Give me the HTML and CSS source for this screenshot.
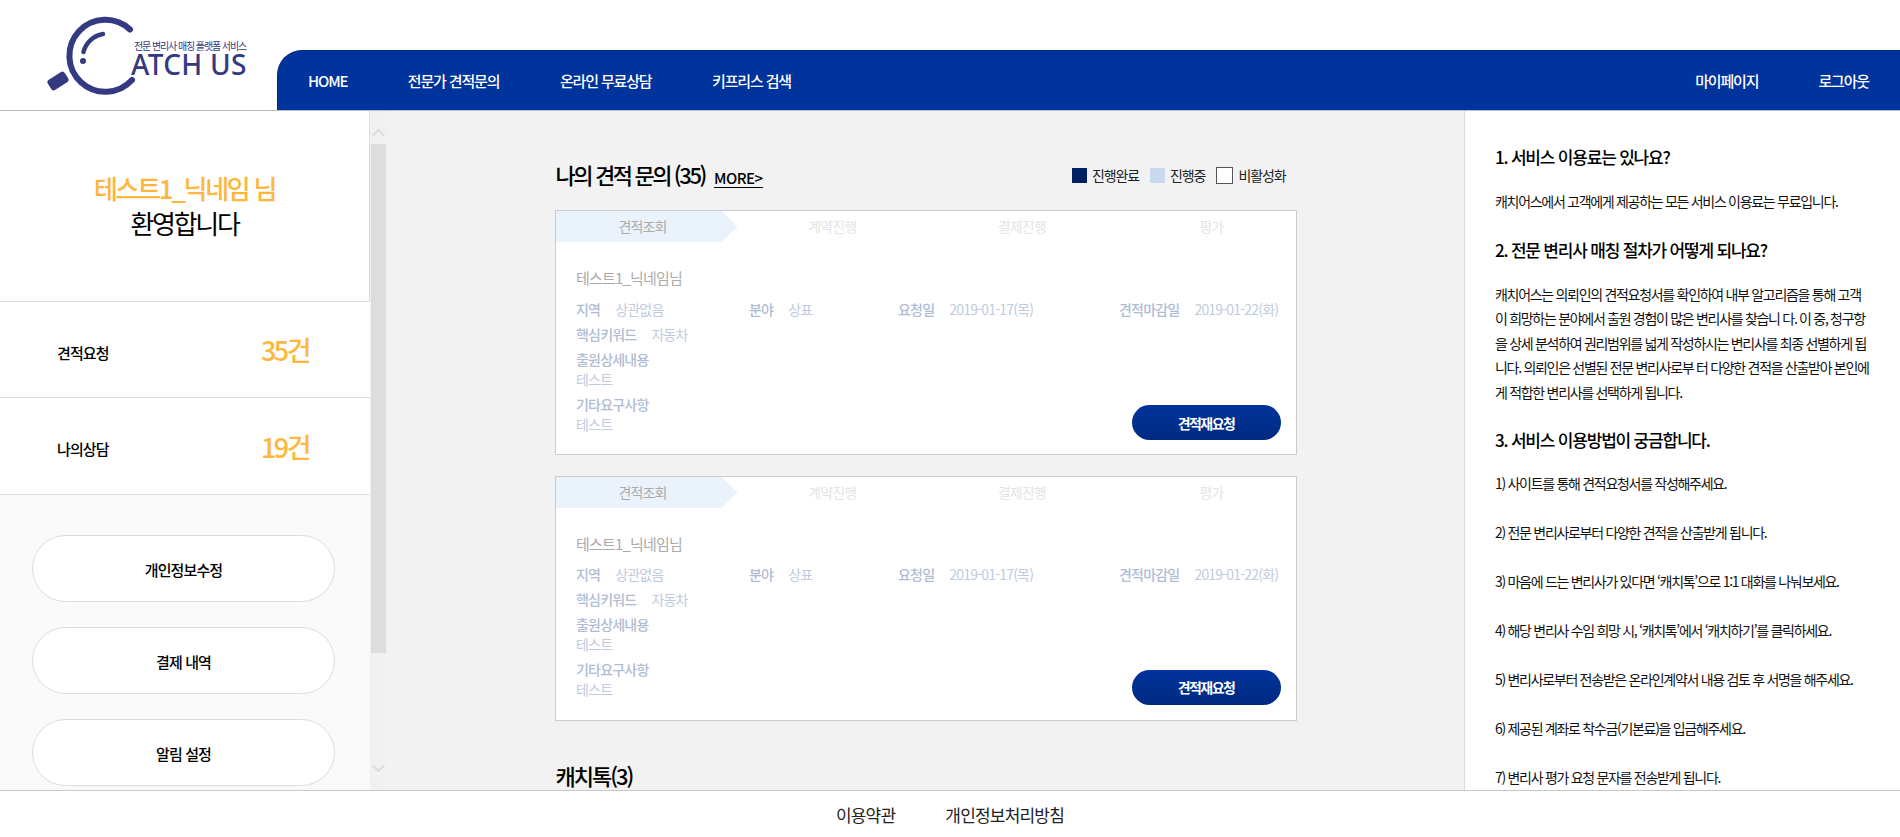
FILE: index.html
```html
<!DOCTYPE html>
<html lang="ko">
<head>
    <meta charset="UTF-8">
    <meta name="viewport" content="width=device-width, initial-scale=1.0">
    <title>CATCH US</title>
    <link rel="stylesheet" href="styles.css">
</head>
<body>
    <header class="top">
        <a class="logo" href="#">
            <svg class="logo-mark" width="140" height="110" viewBox="0 0 140 110">
                <path d="M130 29.5 A36 36 0 1 0 132 80" fill="none" stroke="#333a82" stroke-width="6" stroke-linecap="round"/>
                <path d="M83.5 52 A24 24 0 0 1 103 34" fill="none" stroke="#333a82" stroke-width="4.5" stroke-linecap="round"/>
                <circle cx="83" cy="61" r="3" fill="#333a82"/>
                <rect x="48" y="75" width="20" height="12" rx="3" fill="#333a82" transform="rotate(-33 58 81)"/>
            </svg>
            <span class="logo-sub">전문 변리사 매칭 플랫폼 서비스</span>
            <span class="logo-name">ATCH US</span>
        </a>
        <nav class="gnb">
            <a href="#">HOME</a>
            <a href="#">전문가 견적문의</a>
            <a href="#">온라인 무료상담</a>
            <a href="#">키프리스 검색</a>
            <span class="gnb-right">
                <a href="#">마이페이지</a>
                <a href="#">로그아웃</a>
            </span>
        </nav>
    </header>

    <div class="wrap">
        <aside class="side">
            <div class="welcome">
                <p class="nick">테스트1_닉네임 님</p>
                <p class="hello">환영합니다</p>
            </div>
            <div class="stat"><span>견적요청</span><strong>35건</strong></div>
            <div class="stat"><span>나의상담</span><strong>19건</strong></div>
            <div class="side-menu">
                <a href="#">개인정보수정</a>
                <a href="#">결제 내역</a>
                <a href="#">알림 설정</a>
            </div>
        </aside>
        <div class="scrollbar">
            <svg width="15" height="9" viewBox="0 0 15 9"><path d="M2 7.5 L7.5 2 L13 7.5" fill="none" stroke="#dcdcdc" stroke-width="2"/></svg>
            <div class="thumb"></div>
            <svg class="arrow-down" width="15" height="9" viewBox="0 0 15 9"><path d="M2 1.5 L7.5 7 L13 1.5" fill="none" stroke="#dcdcdc" stroke-width="2"/></svg>
        </div>

        <main class="content">
            <div class="inner">
                <div class="title-row">
                    <h2>나의 견적 문의 (35)</h2>
                    <a class="more" href="#">MORE&gt;</a>
                    <ul class="legend">
                        <li><i class="done"></i>진행완료</li>
                        <li><i class="ing"></i>진행중</li>
                        <li><i class="off"></i>비활성화</li>
                    </ul>
                </div>

                <section class="card">
                    <div class="steps">
                        <span class="on">견적조회</span>
                        <span>계약진행</span>
                        <span>결제진행</span>
                        <span>평가</span>
                    </div>
                    <div class="card-body">
                        <p class="who">테스트1_닉네임님</p>
                        <div class="info">
                            <div><b>지역</b>상관없음</div>
                            <div><b>분야</b>상표</div>
                            <div><b>요청일</b>2019-01-17(목)</div>
                            <div><b>견적마감일</b>2019-01-22(화)</div>
                        </div>
                        <div class="line"><b>핵심키워드</b>자동차</div>
                        <div class="card-foot">
                            <div>
                                <dl><dt>출원상세내용</dt><dd>테스트</dd></dl>
                                <dl><dt>기타요구사항</dt><dd>테스트</dd></dl>
                            </div>
                            <button class="btn-re">견적재요청</button>
                        </div>
                    </div>
                </section>

                <section class="card">
                    <div class="steps">
                        <span class="on">견적조회</span>
                        <span>계약진행</span>
                        <span>결제진행</span>
                        <span>평가</span>
                    </div>
                    <div class="card-body">
                        <p class="who">테스트1_닉네임님</p>
                        <div class="info">
                            <div><b>지역</b>상관없음</div>
                            <div><b>분야</b>상표</div>
                            <div><b>요청일</b>2019-01-17(목)</div>
                            <div><b>견적마감일</b>2019-01-22(화)</div>
                        </div>
                        <div class="line"><b>핵심키워드</b>자동차</div>
                        <div class="card-foot">
                            <div>
                                <dl><dt>출원상세내용</dt><dd>테스트</dd></dl>
                                <dl><dt>기타요구사항</dt><dd>테스트</dd></dl>
                            </div>
                            <button class="btn-re">견적재요청</button>
                        </div>
                    </div>
                </section>

                <h2 class="talk-title">캐치톡(3)</h2>
            </div>
        </main>

        <aside class="faq">
            <h3>1. 서비스 이용료는 있나요?</h3>
            <p>캐치어스에서 고객에게 제공하는 모든 서비스 이용료는 무료입니다.</p>
            <h3>2. 전문 변리사 매칭 절차가 어떻게 되나요?</h3>
            <p>캐치어스는 의뢰인의 견적요청서를 확인하여 내부 알고리즘을 통해 고객이 희망하는 분야에서 출원 경험이 많은 변리사를 찾습니 다. 이 중, 청구항을 상세 분석하여 권리범위를 넓게 작성하시는 변리사를 최종 선별하게 됩니다. 의뢰인은 선별된 전문 변리사로부 터 다양한 견적을 산출받아 본인에게 적합한 변리사를 선택하게 됩니다.</p>
            <h3>3. 서비스 이용방법이 궁금합니다.</h3>
            <ol>
                <li>1) 사이트를 통해 견적요청서를 작성해주세요.</li>
                <li>2) 전문 변리사로부터 다양한 견적을 산출받게 됩니다.</li>
                <li>3) 마음에 드는 변리사가 있다면 ‘캐치톡’으로 1:1 대화를 나눠보세요.</li>
                <li>4) 해당 변리사 수임 희망 시, ‘캐치톡’에서 ‘캐치하기’를 클릭하세요.</li>
                <li>5) 변리사로부터 전송받은 온라인계약서 내용 검토 후 서명을 해주세요.</li>
                <li>6) 제공된 계좌로 착수금(기본료)을 입금해주세요.</li>
                <li>7) 변리사 평가 요청 문자를 전송받게 됩니다.</li>
            </ol>
        </aside>
    </div>

    <footer class="bottom">
        <a href="#">이용약관</a>
        <a href="#">개인정보처리방침</a>
    </footer>
</body>
</html>
```

FILE: styles.css
```css
* {
    box-sizing: border-box;
}
html, body {
    height: 100%;
}
body {
    margin: 0;
    display: flex;
    flex-direction: column;
    overflow: hidden;
    font-family: "Noto Sans CJK KR", "Noto Sans", sans-serif;
    color: #000;
    background: #fff;
}
a {
    color: inherit;
    text-decoration: none;
}
p, h2, h3, ul, ol, dl, dd {
    margin: 0;
    padding: 0;
}
ul, ol {
    list-style: none;
}

/* header */
.top {
    flex: none;
    display: flex;
    height: 111px;
    border-bottom: 1px solid #bdbdbd;
}
.logo {
    position: relative;
    width: 277px;
    flex: none;
    color: #333a82;
}
.logo-mark {
    position: absolute;
    left: 0;
    top: 0;
}
.logo-sub {
    position: absolute;
    left: 134px;
    top: 41px;
    font-size: 10px;
    line-height: 10px;
    letter-spacing: -1.1px;
    white-space: nowrap;
}
.logo-name {
    position: absolute;
    left: 131px;
    top: 52px;
    font-family: "Noto Sans", sans-serif;
    font-size: 28px;
    line-height: 24px;
    font-weight: 500;
    letter-spacing: 0.3px;
    white-space: nowrap;
}
.gnb {
    flex: 1;
    display: flex;
    align-items: center;
    gap: 60.5px;
    margin-top: 50px;
    padding: 0 31px 0 30px;
    background: #00339c;
    border-top: 1px solid #002a80;
    border-left: 1px solid #002a80;
    border-top-left-radius: 25px;
    color: #fff;
    font-size: 15px;
    font-weight: 500;
    letter-spacing: -1.15px;
}
.gnb-right {
    margin-left: auto;
    display: flex;
    gap: 60px;
}

/* layout */
.wrap {
    flex: 1;
    min-height: 0;
    display: flex;
    overflow: hidden;
}

/* left */
.side {
    flex: none;
    width: 370px;
    overflow: hidden;
    background: #fafafa;
}
.welcome {
    height: 191px;
    padding-top: 59px;
    background: #fff;
    border-right: 1px solid #ddd;
    border-bottom: 1px solid #ddd;
    text-align: center;
    font-size: 26px;
    line-height: 35px;
    letter-spacing: -2.3px;
}
.nick {
    color: #ffb63c;
    font-weight: 500;
}
.stat {
    display: flex;
    align-items: center;
    justify-content: space-between;
    height: 96px;
    padding: 0 61px 0 57px;
    background: #fff;
    border-bottom: 1px solid #ddd;
    font-size: 15px;
    letter-spacing: -0.9px;
    font-weight: 500;
}
.stat + .stat {
    height: 97px;
}
.stat span {
    margin-top: 5px;
}
.stat strong {
    color: #ffb63c;
    font-size: 27px;
    font-weight: 500;
    letter-spacing: -2.5px;
}
.side-menu {
    display: flex;
    flex-direction: column;
    gap: 25px;
    padding: 40px 35px 0 32px;
}
.side-menu a {
    height: 67px;
    line-height: 68px;
    text-align: center;
    background: #fff;
    border: 1px solid #ddd;
    border-radius: 34px;
    font-size: 15px;
    font-weight: 500;
    letter-spacing: -0.9px;
}

/* fake scrollbar of the left panel */
.scrollbar {
    flex: none;
    width: 17px;
    display: flex;
    flex-direction: column;
    align-items: center;
    padding: 17px 1px 0;
    background: #f1f1f1;
}
.scrollbar svg {
    flex: none;
}
.thumb {
    width: 15px;
    height: 509px;
    margin-top: 7px;
    background: #ddd;
}
.arrow-down {
    margin-top: 111px;
}

/* middle */
.content {
    flex: 1;
    min-width: 0;
    overflow: hidden;
    background: #f2f2f2;
}
.inner {
    width: 742px;
    margin: 0 auto;
    padding-top: 47px;
}
.title-row {
    display: flex;
    align-items: center;
    height: 34px;
    margin-bottom: 18px;
}
.title-row h2, .talk-title {
    font-size: 22px;
    font-weight: 500;
    letter-spacing: -2.4px;
    line-height: 34px;
}
.title-row h2 {
    margin: -2px 0 0 1px;
}
.more {
    margin: 6px 0 0 9px;
    font-size: 15px;
    font-weight: 500;
    letter-spacing: -0.5px;
    line-height: 18px;
    border-bottom: 1px solid #000;
}
.legend {
    display: flex;
    gap: 11px;
    margin: 0 11px 0 auto;
    font-size: 14px;
    letter-spacing: -1.1px;
    color: #222;
}
.legend li {
    display: flex;
    align-items: center;
    gap: 5px;
}
.legend i {
    width: 15px;
    height: 15px;
}
.done {
    background: #00205f;
}
.ing {
    background: #c9d9f0;
}
.off {
    width: 17px !important;
    height: 17px !important;
    background: #fff;
    border: 1px solid #555;
}

.card {
    height: 245px;
    margin-bottom: 21px;
    background: #fff;
    border: 1px solid #ccc;
}
.steps {
    display: grid;
    grid-template-columns: repeat(4, 189.5px);
    height: 31px;
    line-height: 31px;
    text-align: center;
    font-size: 14px;
    letter-spacing: -0.9px;
    color: #e4e4e4;
}
.steps span {
    padding-right: 15px;
}
.steps .on {
    width: 182px;
    padding-right: 8px;
    color: #aaa;
    background: #eaf2fb;
    clip-path: polygon(0 0, 166px 0, 100% 50%, 166px 100%, 0 100%);
}
.card-body {
    padding: 25px 15px 0 20.5px;
    font-size: 14px;
    letter-spacing: -0.8px;
    line-height: 20px;
    color: #c0cbde;
}
.card-body b {
    font-weight: 500;
    color: #afbcd4;
    margin-right: 15px;
}
.who {
    font-size: 15px;
    color: #aaa;
    line-height: 22px;
    margin-bottom: 10px;
}
.card + .card .who {
    margin-bottom: 8.5px;
}
.info {
    display: grid;
    grid-template-columns: 173px 149px 221px auto;
    white-space: nowrap;
}
.line {
    margin-top: 5px;
}
.card-foot {
    display: flex;
    align-items: flex-end;
    justify-content: space-between;
    margin-top: 5px;
}
.card-foot dt {
    font-weight: 500;
    color: #afbcd4;
}
.card-foot dl {
    margin: 0 0 5px;
}
.btn-re {
    width: 149px;
    height: 35px;
    margin-bottom: -1px;
    border: 0;
    border-radius: 18px;
    background: linear-gradient(#00339c, #002a80);
    color: #fff;
    font-family: inherit;
    font-size: 14px;
    font-weight: 700;
    letter-spacing: -1.6px;
}
.talk-title {
    margin: 37px 0 0 1px;
    letter-spacing: -2px;
}

/* right */
.faq {
    flex: none;
    width: 436px;
    overflow: hidden;
    padding: 32px 30px 0 30px;
    background: #fff;
    border-left: 1px solid #ddd;
    font-size: 14px;
    line-height: 24.5px;
    letter-spacing: -1.3px;
    color: #111;
    word-break: break-all;
}
.faq h3 {
    margin: 0;
    font-size: 17px;
    font-weight: 500;
    line-height: 28px;
    letter-spacing: -1.2px;
    color: #000;
}
.faq p {
    margin: 18px 0 22px;
}
.faq ol {
    margin-top: 17px;
}
.faq li {
    margin-bottom: 24.5px;
}

/* footer */
.bottom {
    flex: none;
    height: 47px;
    display: flex;
    justify-content: center;
    align-items: center;
    gap: 50px;
    background: #fff;
    border-top: 1px solid #c8c8c8;
    font-size: 17px;
    letter-spacing: -0.8px;
    color: #222;
}
```
